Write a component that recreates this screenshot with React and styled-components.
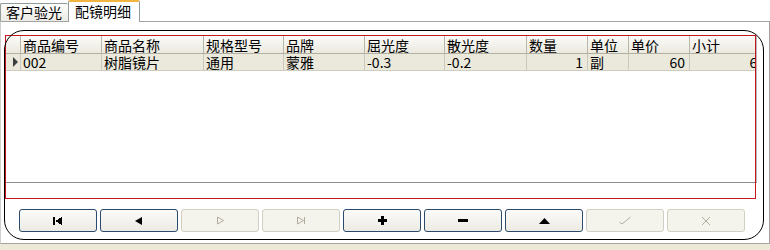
import React from 'react'
import styled, { createGlobalStyle, css } from 'styled-components'

const GlobalStyle = createGlobalStyle`
  body {
    margin: 0;
    background: #ffffff;
    font-family: "Noto Sans CJK SC", "Liberation Sans", sans-serif;
  }
`

const Frame = styled.div`
  width: 770px;
  height: 250px;
  background: #ece9d8;
  display: flex;
  flex-direction: column;
  font-size: 14px;
  color: #000;
`

const TabStrip = styled.div`
  height: 21px;
  flex: none;
  background: #ffffff;
  display: flex;
  align-items: flex-end;
  position: relative;
  z-index: 1;
`

const Tab = styled.div`
  box-sizing: border-box;
  display: flex;
  align-items: center;
  line-height: 15px;
  border: 1px solid #919b9c;
  border-bottom: none;
  border-radius: 2px 2px 0 0;
  ${(p) =>
    p.active
      ? css`
          width: 72px;
          height: 22px;
          margin-bottom: -1px;
          padding: 0 0 2px 6px;
          background: #ffffff;
          border-top: 2px solid #f2b441;
        `
      : css`
          width: 68px;
          height: 18px;
          padding: 0 0 0 5px;
          background: linear-gradient(#fdfdfb, #ecebe5);
          border-right: none;
        `}
`

const TabPage = styled.div`
  box-sizing: border-box;
  height: 223px;
  flex: none;
  background: #ffffff;
  border: 1px solid #a3a3a0;
  border-left-color: #cfcfcb;
  padding: 8px 0 0 3px;
`

const Panel = styled.div`
  box-sizing: border-box;
  position: relative;
  width: 760px;
  height: 210px;
  border: 1px solid transparent;
  &::after {
    content: '';
    position: absolute;
    inset: -1px;
    border: 1px solid #000;
    border-radius: 20px;
    pointer-events: none;
    z-index: 3;
  }
`

const GridFrame = styled.div`
  box-sizing: border-box;
  position: relative;
  width: 751px;
  height: 164px;
  margin-top: 4px;
  padding: 1px 0 0 1px;
  &::after {
    content: '';
    position: absolute;
    inset: 0;
    border: 1px solid #c4161c;
    pointer-events: none;
    z-index: 2;
  }
`

const Grid = styled.div`
  box-sizing: border-box;
  width: 751px;
  height: 147px;
  overflow: hidden;
  background: #ffffff;
  border-bottom: 1px solid #8e8e8e;
  border-right: 1px solid #b8b8b8;
`

const COLS = '15px 81px 102px 80px 81px 80px 82px 61px 41px 61px 80px'

const Row = styled.div`
  display: grid;
  grid-template-columns: ${COLS};
  width: max-content;
  height: ${(p) => (p.head ? 18 : 17)}px;
  background: ${(p) => (p.head ? 'linear-gradient(#fbfbf8, #ebe9df)' : '#ebe9dc')};
  border-bottom: 1px solid ${(p) => (p.head ? '#b2b0a2' : '#cfcdc0')};
  box-sizing: border-box;
`

const Cell = styled.div`
  box-sizing: border-box;
  border-right: 1px solid ${(p) => (p.head ? '#b9b7a8' : '#cbc9bb')};
  padding: 0 ${(p) => (p.right ? 4 : 0)}px 0 2px;
  display: flex;
  align-items: center;
  justify-content: ${(p) => (p.right ? 'flex-end' : 'flex-start')};
  white-space: nowrap;
  line-height: 14px;
  font-size: 14px;
`

const Marker = styled.span`
  width: 0;
  height: 0;
  margin-left: 5px;
  border-top: 5px solid transparent;
  border-bottom: 5px solid transparent;
  border-left: 5px solid #3f3f3f;
`

const NavBar = styled.div`
  display: flex;
  gap: 3px;
  margin-top: 10px;
  padding-left: 14px;
`

const NavButton = styled.div`
  box-sizing: border-box;
  width: 78px;
  height: 23px;
  border-radius: 3px;
  display: flex;
  align-items: center;
  justify-content: center;
  ${(p) =>
    p.disabled
      ? css`
          border: 1px solid #d2cfc2;
          background: #f5f4ec;
        `
      : css`
          border: 1px solid #2a4a6e;
          background: linear-gradient(#fbfbfa, #eceae3);
        `}
`

const Icon = ({ name }) => {
  const off = '#b0ad9f'
  switch (name) {
    case 'first':
      return (
        <svg width="10" height="8" viewBox="0 0 10 8" shapeRendering="crispEdges">
          <rect x="0" y="0" width="2" height="8" fill="#000" />
          <polygon points="2,4 9,0 9,8" fill="#000" />
        </svg>
      )
    case 'prior':
      return (
        <svg width="8" height="8" viewBox="0 0 8 8">
          <polygon points="0,4 7,0 7,8" fill="#000" />
        </svg>
      )
    case 'next':
      return (
        <svg width="9" height="9" viewBox="0 0 9 9">
          <path d="M1.5 1 L1.5 8 M1.5 1 L7.5 4.5 L1.5 8" fill="none" stroke={off} strokeWidth="1" />
        </svg>
      )
    case 'last':
      return (
        <svg width="11" height="9" viewBox="0 0 11 9">
          <path d="M1.5 1 L1.5 8 M1.5 1 L7.5 4.5 L1.5 8 M8.5 1 L8.5 8" fill="none" stroke={off} strokeWidth="1" />
        </svg>
      )
    case 'insert':
      return (
        <svg width="9" height="9" viewBox="0 0 9 9" shapeRendering="crispEdges">
          <rect x="3" y="0" width="3" height="9" fill="#000" />
          <rect x="0" y="3" width="9" height="3" fill="#000" />
        </svg>
      )
    case 'delete':
      return (
        <svg width="10" height="3" viewBox="0 0 10 3" shapeRendering="crispEdges">
          <rect x="0" y="0" width="10" height="3" fill="#000" />
        </svg>
      )
    case 'edit':
      return (
        <svg width="11" height="6" viewBox="0 0 11 6">
          <polygon points="5.5,0 11,6 0,6" fill="#000" />
        </svg>
      )
    case 'post':
      return (
        <svg width="12" height="9" viewBox="0 0 12 9">
          <path d="M0.5 6 L3 8 L11.5 1" fill="none" stroke={off} strokeWidth="1" />
        </svg>
      )
    default:
      return (
        <svg width="10" height="10" viewBox="0 0 10 10">
          <path d="M1 1 L9 9 M9 1 L1 9" fill="none" stroke={off} strokeWidth="1" />
        </svg>
      )
  }
}

const columns = ['商品编号', '商品名称', '规格型号', '品牌', '屈光度', '散光度', '数量', '单位', '单价', '小计']

const rows = [
  [
    { v: '002' },
    { v: '树脂镜片' },
    { v: '通用' },
    { v: '蒙雅' },
    { v: '-0.3' },
    { v: '-0.2' },
    { v: '1', right: true },
    { v: '副' },
    { v: '60', right: true },
    { v: '60', right: true },
  ],
]

const buttons = [
  { name: 'first' },
  { name: 'prior' },
  { name: 'next', disabled: true },
  { name: 'last', disabled: true },
  { name: 'insert' },
  { name: 'delete' },
  { name: 'edit' },
  { name: 'post', disabled: true },
  { name: 'cancel', disabled: true },
]

const App = () => (
  <>
    <GlobalStyle />
    <Frame>
      <TabStrip>
        <Tab>客户验光</Tab>
        <Tab active>配镜明细</Tab>
      </TabStrip>
      <TabPage>
        <Panel>
          <GridFrame>
            <Grid>
              <Row head>
                <Cell head />
                {columns.map((c) => (
                  <Cell head key={c}>
                    {c}
                  </Cell>
                ))}
              </Row>
              {rows.map((r, i) => (
                <Row key={i}>
                  <Cell>
                    <Marker />
                  </Cell>
                  {r.map((c, j) => (
                    <Cell key={j} right={c.right}>
                      {c.v}
                    </Cell>
                  ))}
                </Row>
              ))}
            </Grid>
          </GridFrame>
          <NavBar>
            {buttons.map((b) => (
              <NavButton key={b.name} disabled={b.disabled}>
                <Icon name={b.name} />
              </NavButton>
            ))}
          </NavBar>
        </Panel>
      </TabPage>
    </Frame>
  </>
)

export default App
